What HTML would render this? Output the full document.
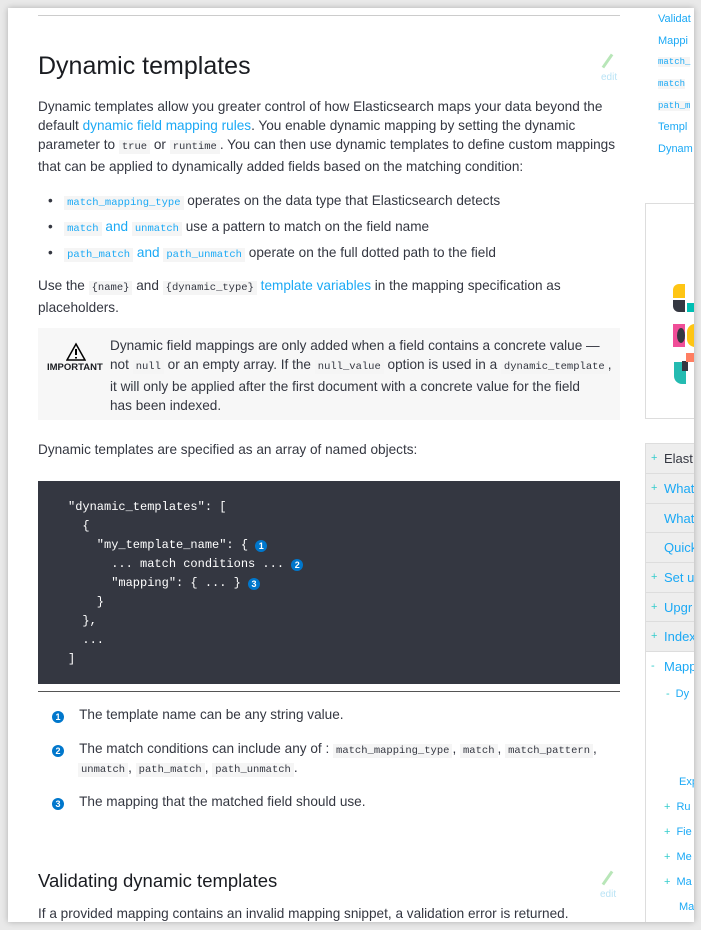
<!DOCTYPE html>
<html><head><meta charset="utf-8">
<style>
*{box-sizing:border-box;margin:0;padding:0}
html,body{width:701px;height:930px;overflow:hidden;background:#e9e9e9}
body{font-family:"Liberation Sans",sans-serif;color:#343741;position:relative}
.frame{position:absolute;left:8px;top:8px;width:686px;height:914px;background:#fff;box-shadow:0 0 6px rgba(0,0,0,.25);overflow:hidden}
.a{position:absolute;white-space:nowrap}
.p{font-size:13.6px;line-height:19px}
code{font-family:"Liberation Mono",monospace;font-size:10.5px;background:#f5f5f5;padding:1px 3px;color:#343741}
.lk{color:#1ba9f5}
code.lk{color:#1ba9f5}
.code{position:absolute;left:30px;top:473px;width:582px;height:203px;background:#343741}
.cl{position:absolute;left:60px;font-family:"Liberation Mono",monospace;font-size:12px;color:#fff;white-space:pre;line-height:19px}
.co{display:inline-block;width:12px;height:12px;border-radius:50%;background:#0077cc;color:#fff;font:bold 9px/12px "Liberation Sans",sans-serif;text-align:center;vertical-align:-1px}
.side{position:absolute;font-size:11px;color:#1ba9f5;white-space:nowrap}
.nav{position:absolute;left:637px;width:60px;height:30px;background:#eee;border-top:1px solid #ddd;border-left:1px solid #ddd;font-size:13px;color:#1ba9f5;line-height:29px}
.nav span{position:absolute;left:18px}
.nav i{position:absolute;left:5px;color:#3cc;font-style:normal;font-size:11px}
.sub{position:absolute;font-size:11px;color:#1ba9f5;white-space:nowrap}
.sub i{color:#3cc;font-style:normal;margin-right:6px}
</style></head><body>
<div class="frame">
<div class="a" style="left:30px;top:7px;width:582px;height:1px;background:#ccc"></div>
<div class="a" style="left:30px;top:44px;font-size:25px;color:#1a1c21">Dynamic templates</div>
<div class="a" style="left:598px;top:45px;width:3px;height:16px;background:#b8e6b8;transform:rotate(35deg)"></div>
<div class="a" style="left:593px;top:64px;font-size:10px;color:#b9e3f5">edit</div>
<div class="a p" style="left:30px;top:89px">Dynamic templates allow you greater control of how Elasticsearch maps your data beyond the<br>default <span class="lk">dynamic field mapping rules</span>. You enable dynamic mapping by setting the dynamic<br>parameter to <code>true</code> or <code>runtime</code>. You can then use dynamic templates to define custom mappings<br>that can be applied to dynamically added fields based on the matching condition:</div>
<div class="a p" style="left:40px;top:181px;line-height:23px">•&nbsp;&nbsp;&nbsp;<code class="lk">match_mapping_type</code> operates on the data type that Elasticsearch detects<br>•&nbsp;&nbsp;&nbsp;<code class="lk">match</code> <span class="lk">and</span> <code class="lk">unmatch</code> use a pattern to match on the field name<br>•&nbsp;&nbsp;&nbsp;<code class="lk">path_match</code> <span class="lk">and</span> <code class="lk">path_unmatch</code> operate on the full dotted path to the field</div>
<div class="a p" style="left:30px;top:268px">Use the <code>{name}</code> and <code>{dynamic_type}</code> <span class="lk">template variables</span> in the mapping specification as<br>placeholders.</div>
<div class="a" style="left:30px;top:320px;width:582px;height:92px;background:#f7f7f7"></div>
<svg class="a" style="left:58px;top:334px" width="20" height="20" viewBox="0 0 20 20"><path d="M10 2 L19 18 H1 Z" fill="none" stroke="#000" stroke-width="1.5"/><path d="M10 7 V13 M10 15 V16.5" stroke="#000" stroke-width="2"/></svg>
<div class="a" style="left:39px;top:354px;font-size:9.5px;font-weight:bold;color:#1a1c21">IMPORTANT</div>
<div class="a p" style="left:102px;top:328px">Dynamic field mappings are only added when a field contains a concrete value —<br>not <code>null</code> or an empty array. If the <code>null_value</code> option is used in a <code>dynamic_template</code>,<br>it will only be applied after the first document with a concrete value for the field<br>has been indexed.</div>
<div class="a p" style="left:30px;top:432px">Dynamic templates are specified as an array of named objects:</div>
<div class="code"></div>
<div class="cl" style="top:490px">"dynamic_templates": [
  {
    "my_template_name": { <span class="co">1</span>
      ... match conditions ... <span class="co">2</span>
      "mapping": { ... } <span class="co">3</span>
    }
  },
  ...
]</div>
<div class="a" style="left:30px;top:683px;width:582px;height:1px;background:#555"></div>
<div class="a p" style="left:44px;top:697px"><span class="co">1</span>&nbsp;&nbsp;&nbsp;&nbsp;The template name can be any string value.</div>
<div class="a p" style="left:44px;top:731px"><span class="co">2</span>&nbsp;&nbsp;&nbsp;&nbsp;The match conditions can include any of : <code>match_mapping_type</code>, <code>match</code>, <code>match_pattern</code>,</div>
<div class="a p" style="left:70px;top:750px"><code>unmatch</code>, <code>path_match</code>, <code>path_unmatch</code>.</div>
<div class="a p" style="left:44px;top:784px"><span class="co">3</span>&nbsp;&nbsp;&nbsp;&nbsp;The mapping that the matched field should use.</div>
<div class="a" style="left:30px;top:862px;font-size:18.5px;color:#1a1c21">Validating dynamic templates</div>
<div class="a" style="left:598px;top:862px;width:3px;height:16px;background:#b8e6b8;transform:rotate(35deg)"></div>
<div class="a" style="left:592px;top:881px;font-size:10px;color:#b9e3f5">edit</div>
<div class="a p" style="left:30px;top:896px">If a provided mapping contains an invalid mapping snippet, a validation error is returned.</div>

<div class="side" style="left:650px;top:5px">Validat</div>
<div class="side" style="left:650px;top:27px">Mappi</div>
<div class="side" style="left:650px;top:49px;font-family:'Liberation Mono',monospace;font-size:9px;background:#f5f5f5">match_</div>
<div class="side" style="left:650px;top:71px;font-family:'Liberation Mono',monospace;font-size:9px;background:#f5f5f5">match</div>
<div class="side" style="left:650px;top:93px;font-family:'Liberation Mono',monospace;font-size:9px;background:#f5f5f5">path_m</div>
<div class="side" style="left:650px;top:113px">Templ</div>
<div class="side" style="left:650px;top:135px">Dynam</div>
<div class="a" style="left:637px;top:195px;width:60px;height:216px;border:1px solid #ddd"></div>
<div class="a" style="left:665px;top:276px;width:12px;height:14px;background:#fec514;border-radius:6px 0 0 0"></div>
<div class="a" style="left:665px;top:292px;width:12px;height:12px;background:#343741;border-radius:0 0 0 6px"></div>
<div class="a" style="left:679px;top:295px;width:8px;height:9px;background:#00bfb3"></div>
<div class="a" style="left:665px;top:316px;width:12px;height:23px;background:#f04e98"></div>
<div class="a" style="left:669px;top:320px;width:8px;height:15px;background:#343741;border-radius:50%"></div>
<div class="a" style="left:679px;top:316px;width:8px;height:23px;background:#fec514;border-radius:8px 0 0 8px"></div>
<div class="a" style="left:666px;top:354px;width:12px;height:22px;background:#24bbb1;border-radius:0 0 0 8px"></div>
<div class="a" style="left:674px;top:353px;width:6px;height:10px;background:#343741"></div>
<div class="a" style="left:678px;top:345px;width:9px;height:9px;background:#ff7e62"></div>
<div class="nav" style="top:435px"><i>+</i><span style="color:#343741">Elast</span></div>
<div class="nav" style="top:465px"><i>+</i><span>What</span></div>
<div class="nav" style="top:495px"><span>What</span></div>
<div class="nav" style="top:524px"><span>Quick</span></div>
<div class="nav" style="top:554px"><i>+</i><span>Set u</span></div>
<div class="nav" style="top:584px"><i>+</i><span>Upgr</span></div>
<div class="nav" style="top:613px"><i>+</i><span>Index</span></div>
<div class="nav" style="top:643px;background:#fff"><i>-</i><span>Mapp</span></div>
<div class="a" style="left:637px;top:673px;width:1px;height:241px;background:#ddd"></div>
<div class="sub" style="left:658px;top:680px"><i>-</i>Dy</div>
<div class="sub" style="left:671px;top:768px">Exp</div>
<div class="sub" style="left:656px;top:793px"><i>+</i>Ru</div>
<div class="sub" style="left:656px;top:818px"><i>+</i>Fie</div>
<div class="sub" style="left:656px;top:843px"><i>+</i>Me</div>
<div class="sub" style="left:656px;top:868px"><i>+</i>Ma</div>
<div class="sub" style="left:671px;top:893px">Ma</div>
</div>
</body></html>
